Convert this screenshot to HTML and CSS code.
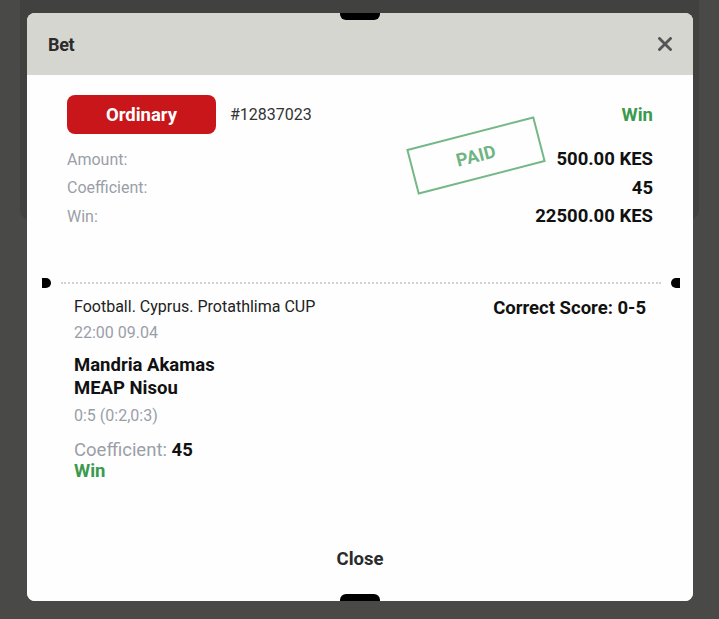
FILE: index.html
```html
<!DOCTYPE html>
<html>
<head>
<meta charset="utf-8">
<link rel="stylesheet" href="styles.css">
</head>
<body>
<div class="page">
  <div class="page-card"></div>
</div>
<div class="modal">
  <div class="notch notch-top"></div>
  <div class="modal-header">
    <span class="modal-title">Bet</span>
    <svg class="close-x" width="14" height="14" viewBox="0 0 14 14"><path d="M1.5 1.5 L12.5 12.5 M12.5 1.5 L1.5 12.5" stroke="#555" stroke-width="2.8" stroke-linecap="square"/></svg>
  </div>
  <div class="modal-body">
    <div class="summary">
      <div class="summary-top">
        <div class="type-badge">Ordinary</div>
        <span class="bet-id">#12837023</span>
        <span class="status-win">Win</span>
      </div>
      <div class="summary-row"><span class="label">Amount:</span><span class="value">500.00 KES</span></div>
      <div class="summary-row"><span class="label">Coefficient:</span><span class="value">45</span></div>
      <div class="summary-row"><span class="label">Win:</span><span class="value">22500.00 KES</span></div>
      <div class="stamp"><span>PAID</span></div>
    </div>
    <div class="separator">
      <span class="half half-left"></span>
      <span class="dots"></span>
      <span class="half half-right"></span>
    </div>
    <div class="event">
      <div class="event-head">
        <span class="event-league">Football. Cyprus. Protathlima CUP</span>
        <span class="event-market">Correct Score: 0-5</span>
      </div>
      <div class="event-date">22:00 09.04</div>
      <div class="event-teams">Mandria Akamas<br>MEAP Nisou</div>
      <div class="event-score">0:5 (0:2,0:3)</div>
      <div class="event-coef">Coefficient: <b>45</b></div>
      <div class="event-result">Win</div>
    </div>
    <div class="footer">
      <div class="close-btn">Close</div>
    </div>
  </div>
  <div class="notch notch-bottom"></div>
</div>
</body>
</html>
```

FILE: styles.css
```css
* { box-sizing: border-box; }
html, body { margin: 0; padding: 0; }
body {
  width: 719px;
  height: 619px;
  background: #494947;
  font-family: Roboto, "Noto Sans", Arial, sans-serif;
  overflow: hidden;
  position: relative;
}
.page { padding: 0 20px; }
.page-card {
  height: 220px;
  background: #41413f;
  border-radius: 0 0 10px 10px;
}
.modal {
  position: absolute;
  left: 27px;
  top: 13px;
  width: 666px;
  height: 588px;
  background: #fdfdfd;
  border-radius: 8px;
  overflow: hidden;
  display: flex;
  flex-direction: column;
}
.notch {
  position: absolute;
  left: 313px;
  width: 40px;
  height: 7px;
  background: #000;
}
.notch-top { top: 0; border-radius: 0 0 6px 6px; }
.notch-bottom { bottom: 0; border-radius: 6px 6px 0 0; }
.modal-header {
  height: 62px;
  background: #d5d6d0;
  display: flex;
  align-items: center;
  justify-content: space-between;
  padding: 0 21px 0 21px;
  flex-shrink: 0;
}
.modal-title {
  font-size: 18px;
  font-weight: 700;
  color: #2b2b2b;
  letter-spacing: -0.3px;
}
.modal-body {
  flex: 1;
  display: flex;
  flex-direction: column;
  padding: 20px 40px 0;
  background: #fefefe;
}
.summary { position: relative; }
.summary-top {
  display: flex;
  align-items: center;
  height: 39px;
}
.type-badge {
  width: 149px;
  height: 39px;
  border-radius: 8px;
  background: #c8161a;
  color: #fff;
  font-weight: 700;
  font-size: 18.5px;
  display: flex;
  align-items: center;
  justify-content: center;
}
.bet-id {
  margin-left: 14px;
  font-size: 16px;
  color: #333;
}
.status-win {
  margin-left: auto;
  font-size: 18.5px;
  font-weight: 700;
  color: #3b9a4e;
}
.summary-top + .summary-row { margin-top: 11px; }
.summary-row {
  display: flex;
  justify-content: space-between;
  align-items: center;
  height: 28.5px;
}
.label { font-size: 16px; color: #9a9ea8; }
.value { font-size: 18.5px; font-weight: 700; color: #111; }
.stamp {
  position: absolute;
  left: 343px;
  top: 37px;
  width: 132px;
  height: 47px;
  border: 2px solid #74b887;
  transform: rotate(-14.5deg);
  display: flex;
  align-items: center;
  justify-content: center;
  color: #6fb482;
  font-weight: 700;
  font-size: 18px;
  letter-spacing: 0.3px;
}
.separator {
  margin: 47px -27px 0 -25px;
  height: 10px;
  display: flex;
  align-items: center;
}
.half {
  width: 9px;
  height: 10px;
  background: #000;
  flex-shrink: 0;
}
.half-left { border-radius: 0 5px 5px 0; }
.half-right { border-radius: 5px 0 0 5px; }
.dots {
  flex: 1;
  margin: 0 10px;
  border-top: 2px dotted #d2d2d2;
}
.event {
  padding: 9px 7px 0;
  color: #1a1a1a;
}
.event-head {
  display: flex;
  justify-content: space-between;
  align-items: center;
  height: 20px;
}
.event-league { font-size: 16px; color: #222; }
.event-market { font-size: 18.5px; font-weight: 700; color: #111; margin-top: 3px; }
.event-date {
  margin-top: 6px;
  font-size: 16px;
  line-height: 20px;
  color: #9a9ea8;
}
.event-teams {
  margin-top: 11px;
  font-size: 18.5px;
  font-weight: 700;
  line-height: 23px;
  color: #111;
}
.event-score {
  margin-top: 6px;
  font-size: 16px;
  line-height: 20px;
  color: #9a9ea8;
}
.event-coef {
  margin-top: 14px;
  font-size: 18.5px;
  line-height: 21px;
  color: #9a9ea8;
}
.event-coef b { color: #111; }
.event-result {
  font-size: 18.5px;
  line-height: 21px;
  font-weight: 700;
  color: #3b9a4e;
}
.footer {
  margin-top: auto;
  padding: 0 0 21px;
  margin-left: -19px;
  margin-right: -19px;
}
.close-btn {
  height: 43px;
  background: #fefefe;
  border-radius: 8px;
  display: flex;
  align-items: center;
  justify-content: center;
  font-size: 18.5px;
  font-weight: 700;
  color: #2b2b2b;
}
```
